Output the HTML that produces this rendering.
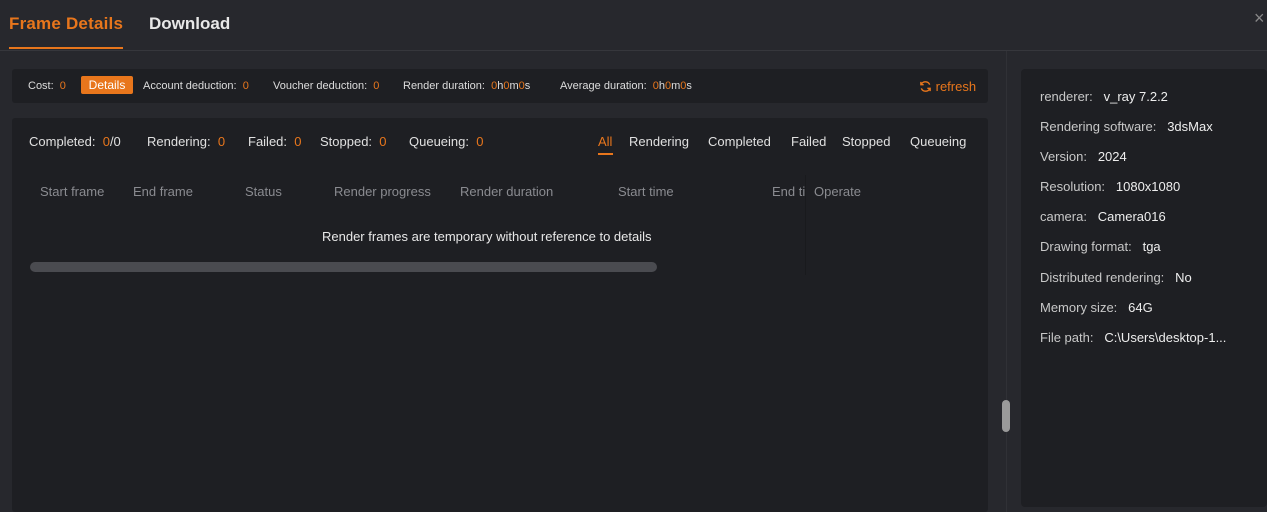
<!DOCTYPE html>
<html><head><meta charset="utf-8"><style>
*{margin:0;padding:0;box-sizing:border-box}
body{width:1267px;height:512px;background:#27282d;font-family:"Liberation Sans",sans-serif;position:relative;overflow:hidden;color:#d8d8d8}
.a{position:absolute;white-space:nowrap}
.o{color:#e8761c}
.s{top:134px;font-size:13px;color:#e0e0e0}
</style></head><body>
<div class="a" style="left:0;top:50px;width:1267px;height:1px;background:#36373c"></div>
<div class="a o" style="left:9px;top:14px;font-size:17px;font-weight:bold;letter-spacing:0.2px">Frame Details</div>
<div class="a" style="left:9px;top:47px;width:114px;height:2px;background:#e8761c"></div>
<div class="a" style="left:149px;top:14px;font-size:17px;font-weight:bold;color:#e8e8e8">Download</div>
<div class="a" style="left:1254px;top:8px;font-size:18px;color:#888">×</div>

<div class="a" style="left:12px;top:69px;width:976px;height:34px;background:#1e1f23;border-radius:3px"></div>
<div class="a" style="left:28px;top:80px;font-size:11px;color:#ddd">Cost:&nbsp; <span class="o">0</span></div>
<div class="a" style="left:81px;top:76px;width:52px;height:18px;background:#e8761c;border-radius:2px;color:#fff;font-size:12px;text-align:center;line-height:18px">Details</div>
<div class="a" style="left:143px;top:80px;font-size:11px;color:#ddd">Account deduction:&nbsp; <span class="o">0</span></div>
<div class="a" style="left:273px;top:80px;font-size:11px;color:#ddd">Voucher deduction:&nbsp; <span class="o">0</span></div>
<div class="a" style="left:403px;top:80px;font-size:11px;color:#ddd">Render duration:&nbsp; <span class="o">0</span>h<span class="o">0</span>m<span class="o">0</span>s</div>
<div class="a" style="left:560px;top:80px;font-size:11px;color:#ddd">Average duration:&nbsp; <span class="o">0</span>h<span class="o">0</span>m<span class="o">0</span>s</div>
<div class="a o" style="left:919px;top:79px;font-size:13px"><svg width="13" height="13" viewBox="0 0 14 14" style="vertical-align:-2px"><path d="M11.5 5A5 5 0 0 0 2.5 4.5M2.5 9A5 5 0 0 0 11.5 9.5" fill="none" stroke="#e8761c" stroke-width="1.5"/><path d="M2 2v3h3M12 12V9H9" fill="none" stroke="#e8761c" stroke-width="1.5"/></svg> refresh</div>

<div class="a" style="left:12px;top:118px;width:976px;height:394px;background:#1e1f23;border-radius:3px"></div>
<div class="a s" style="left:29px">Completed:&nbsp; <span class="o">0</span>/0</div>
<div class="a s" style="left:147px">Rendering:&nbsp; <span class="o">0</span></div>
<div class="a s" style="left:248px">Failed:&nbsp; <span class="o">0</span></div>
<div class="a s" style="left:320px">Stopped:&nbsp; <span class="o">0</span></div>
<div class="a s" style="left:409px">Queueing:&nbsp; <span class="o">0</span></div>
<div class="a o" style="left:598px;top:134px;font-size:13px">All</div>
<div class="a" style="left:598px;top:153px;width:15px;height:2px;background:#e8761c"></div>
<div class="a s" style="left:629px">Rendering</div>
<div class="a s" style="left:708px">Completed</div>
<div class="a s" style="left:791px">Failed</div>
<div class="a s" style="left:842px">Stopped</div>
<div class="a s" style="left:910px">Queueing</div>
<div class="a" style="top:184px;left:40px;font-size:13px;color:#8a8b90">Start frame</div>
<div class="a" style="top:184px;left:133px;font-size:13px;color:#8a8b90">End frame</div>
<div class="a" style="top:184px;left:245px;font-size:13px;color:#8a8b90">Status</div>
<div class="a" style="top:184px;left:334px;font-size:13px;color:#8a8b90">Render progress</div>
<div class="a" style="top:184px;left:460px;font-size:13px;color:#8a8b90">Render duration</div>
<div class="a" style="top:184px;left:618px;font-size:13px;color:#8a8b90">Start time</div>
<div class="a" style="top:184px;left:772px;font-size:13px;color:#8a8b90">End ti</div>
<div class="a" style="top:184px;left:814px;font-size:13px;color:#8a8b90">Operate</div>
<div class="a" style="left:805px;top:175px;width:1px;height:100px;background:#191a1d"></div>
<div class="a" style="left:322px;top:229px;font-size:13px;color:#e8e8e8">Render frames are temporary without reference to details</div>
<div class="a" style="left:30px;top:262px;width:627px;height:10px;background:#4a4b50;border-radius:5px"></div>

<div class="a" style="left:1006px;top:51px;width:1px;height:461px;background:#303136"></div>
<div class="a" style="left:1002px;top:400px;width:8px;height:32px;background:#9a9a9a;border-radius:4px"></div>

<div class="a" style="left:1021px;top:69px;width:246px;height:438px;background:#1e1f23;border-radius:4px"></div>
<div class="a" style="left:1040px;top:82px;font-size:13px;line-height:30.1px;color:#c8c8c8">
renderer:&nbsp;&nbsp; <span style="color:#eee">v_ray 7.2.2</span><br>
Rendering software:&nbsp;&nbsp; <span style="color:#eee">3dsMax</span><br>
Version:&nbsp;&nbsp; <span style="color:#eee">2024</span><br>
Resolution:&nbsp;&nbsp; <span style="color:#eee">1080x1080</span><br>
camera:&nbsp;&nbsp; <span style="color:#eee">Camera016</span><br>
Drawing format:&nbsp;&nbsp; <span style="color:#eee">tga</span><br>
Distributed rendering:&nbsp;&nbsp; <span style="color:#eee">No</span><br>
Memory size:&nbsp;&nbsp; <span style="color:#eee">64G</span><br>
File path:&nbsp;&nbsp; <span style="color:#eee">C:\Users\desktop-1...</span>
</div>
</body></html>
